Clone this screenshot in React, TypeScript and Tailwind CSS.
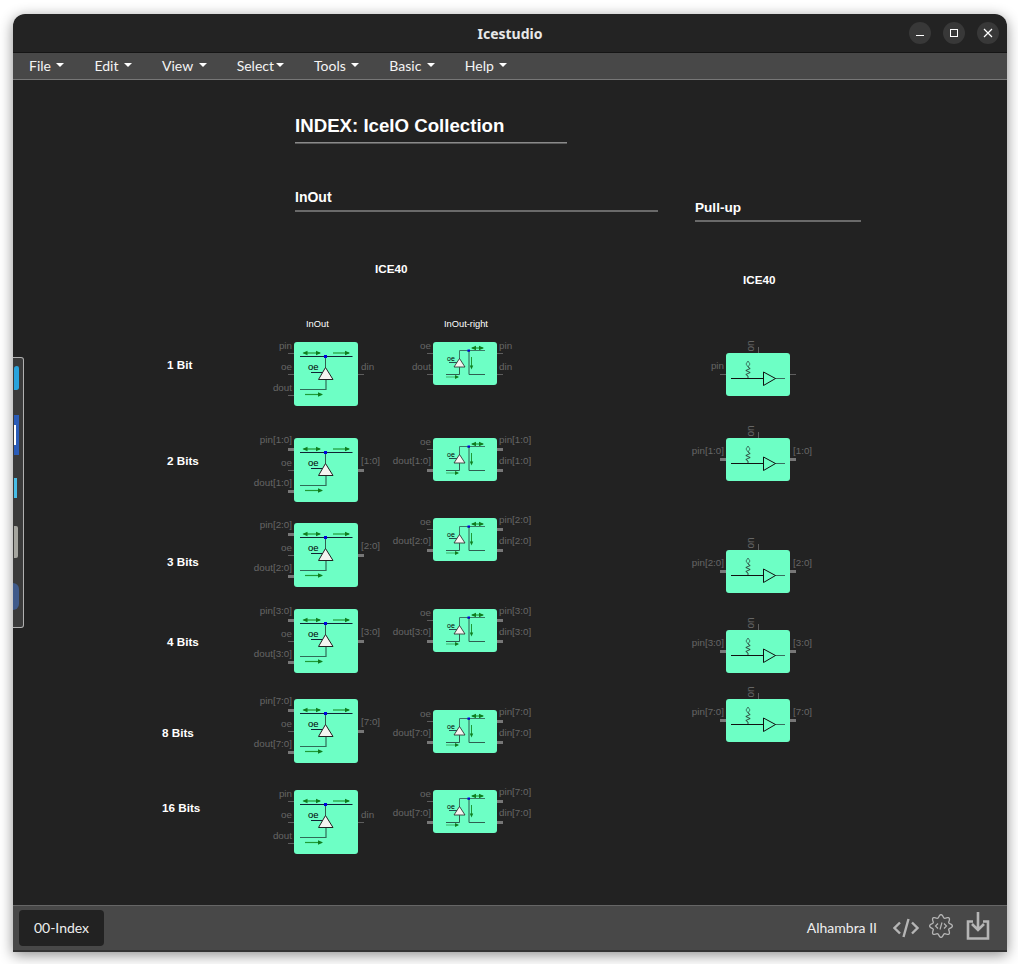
const menus = ['File', 'Edit', 'View', 'Select', 'Tools', 'Basic', 'Help']

type Side = { y: number; label: string; bus?: boolean; dy?: number }

function Arrow({ x1, x2, y, both }: { x1: number; x2: number; y: number; both?: boolean }) {
  return (
    <g>
      <line x1={x1} y1={y} x2={x2} y2={y} stroke="#1f9a35" strokeWidth="1.2" />
      <path d={`M${x2 + 1} ${y}l-5 -2.2v4.4z`} fill="#0f7d1e" />
      {both && <path d={`M${x1 - 1} ${y}l5 -2.2v4.4z`} fill="#0f7d1e" />}
    </g>
  )
}

function InOutArt() {
  return (
    <svg viewBox="0 0 64 64" className="absolute inset-0 h-16 w-16">
      <Arrow x1={9.5} x2={26} y={11} both />
      <Arrow x1={39} x2={55} y={11} />
      <line x1="6" y1="14.5" x2="58.5" y2="14.5" stroke="#123" strokeWidth="1" />
      <line x1="31.5" y1="14" x2="31.5" y2="26" stroke="#2f5f50" strokeWidth="1" />
      <rect x="30" y="13" width="3" height="3" fill="#0000e0" />
      <text x="14" y="28" fontSize="9.5" fill="#000000" className="font-['Liberation_Sans',sans-serif]">oe</text>
      <line x1="17" y1="30.5" x2="28" y2="30.5" stroke="#123" strokeWidth="1" />
      <path d="M31.5 25.5L39 37.5H24.5Z" fill="#f4f4f0" stroke="#222" strokeWidth="1" />
      <path d="M6 47.5H32V38" fill="none" stroke="#2f6b57" strokeWidth="1.2" />
      <Arrow x1={11} x2={28} y={52.5} />
    </svg>
  )
}

function InOutRightArt() {
  return (
    <svg viewBox="0 0 64 43" className="absolute inset-0 h-[43px] w-16">
      <Arrow x1={39} x2={50} y={6} both />
      <path d="M26.5 18V8.5H52" fill="none" stroke="#3a7a66" strokeWidth="1" />
      <rect x="34.5" y="7.5" width="2.5" height="2.5" fill="#0000e0" />
      <path d="M36 9V32.5H52" fill="none" stroke="#2f5f50" strokeWidth="1" />
      <line x1="38.5" y1="15" x2="38.5" y2="26" stroke="#1f9a35" strokeWidth="1" />
      <path d="M38.5 27.5l-1.7 -4h3.4z" fill="#0f7d1e" />
      <text x="14" y="18.5" fontSize="7" fill="#000000" className="font-['Liberation_Sans',sans-serif]">oe</text>
      <line x1="16" y1="20.5" x2="24" y2="20.5" stroke="#123" strokeWidth="0.8" />
      <path d="M26.5 16.5L32 25H21Z" fill="#f4f4f0" stroke="#222" strokeWidth="0.8" />
      <path d="M13 32.5H26.5V25" fill="none" stroke="#2f5f50" strokeWidth="1" />
      <line x1="13" y1="35" x2="25" y2="35" stroke="#4fd08a" strokeWidth="1.6" />
      <path d="M26 35l-4 -2v4z" fill="#0f7d1e" />
    </svg>
  )
}

function PullUpArt() {
  return (
    <svg viewBox="0 0 64 43" className="absolute inset-0 h-[43px] w-16">
      <path d="M22 8l2 3 -2 3 -2 -3z" fill="none" stroke="#2a4a40" strokeWidth="0.7" />
      <path d="M22 14l2.2 1.5 -4.4 2 4.4 2 -4.4 2 2.2 1.5V25" fill="none" stroke="#222" strokeWidth="0.8" />
      <line x1="5" y1="25.5" x2="37" y2="25.5" stroke="#111" strokeWidth="1" />
      <line x1="49" y1="25.5" x2="59" y2="25.5" stroke="#3a6d5e" strokeWidth="1" />
      <path d="M37.5 19L49.5 25.5 37.5 32.5Z" fill="none" stroke="#111" strokeWidth="1" />
    </svg>
  )
}

function Stub({ side, y, bus, w = 6 }: { side: 'l' | 'r'; y: number; bus?: boolean; w?: number }) {
  const h = bus ? 3 : 1
  return (
    <div
      className={bus ? 'absolute bg-[#777777]' : 'absolute bg-[#5e5e5e]'}
      style={{ top: y - h / 2, height: h, width: w, [side === 'l' ? 'left' : 'right']: -w }}
    />
  )
}

const labelTop = (p: Side) => p.y - (p.dy ?? (p.bus ? 15 : 13.5))

function Node({
  x,
  y,
  h,
  left,
  right,
  on,
  gap = 67,
  children,
}: {
  x: number
  y: number
  h: number
  left: Side[]
  right: Side[]
  on?: boolean
  gap?: number
  children: React.ReactNode
}) {
  // canvas starts at 13,80 in the window
  return (
    <div className="absolute w-16 rounded-[3px] bg-[#6dffc5]" style={{ left: x - 13, top: y - 80, height: h }}>
      {children}
      {left.map((p) => (
        <div key={p.label}>
          <Stub side="l" y={p.y} bus={p.bus} />
          <span
            className="absolute right-[66px] whitespace-nowrap text-[9.8px] leading-3 text-[#666666]"
            style={{ top: labelTop(p) }}
          >
            {p.label}
          </span>
        </div>
      ))}
      {right.map((p, i) => (
        <div key={i}>
          <Stub side="r" y={p.y} bus={p.bus} />
          <span
            className="absolute whitespace-nowrap text-[9.8px] leading-3 text-[#666666]"
            style={{ top: labelTop(p), left: gap }}
          >
            {p.label}
          </span>
        </div>
      ))}
      {on && (
        <>
          <div className="absolute left-[32px] top-[-6px] h-[6px] w-px bg-[#5e5e5e]" />
          <span className="absolute left-[19px] top-[-13px] rotate-[-90deg] text-[10px] leading-3 text-[#666666]">on</span>
        </>
      )}
    </div>
  )
}

const inOut = [
  { y: 342, r: '' },
  { y: 438, r: '1:0' },
  { y: 523, r: '2:0' },
  { y: 609, r: '3:0' },
  { y: 699, r: '7:0' },
  { y: 790, r: '' },
]
const inOutRight = [
  { y: 342, r: '' },
  { y: 438, r: '1:0' },
  { y: 518, r: '2:0' },
  { y: 609, r: '3:0' },
  { y: 710, r: '7:0' },
  { y: 790, r: '7:0' },
]
const pullUps = [
  { y: 353, r: '' },
  { y: 438, r: '1:0' },
  { y: 550, r: '2:0' },
  { y: 630, r: '3:0' },
  { y: 699, r: '7:0' },
]
const rowLabels = [
  { x: 167, y: 365, t: '1 Bit' },
  { x: 167, y: 461, t: '2 Bits' },
  { x: 167, y: 562, t: '3 Bits' },
  { x: 167, y: 642, t: '4 Bits' },
  { x: 162, y: 733, t: '8 Bits' },
  { x: 162, y: 808, t: '16 Bits' },
]

function CanvasText({ x, y, className, children }: { x: number; y: number; className: string; children: React.ReactNode }) {
  return (
    <div className={`absolute whitespace-nowrap leading-none ${className}`} style={{ left: x - 13, top: y - 80 }}>
      {children}
    </div>
  )
}

function Rule({ x, y, w, className }: { x: number; y: number; w: number; className: string }) {
  return <div className={`absolute ${className}`} style={{ left: x - 13, top: y - 80, width: w }} />
}

function Canvas() {
  return (
    <div className="relative flex-1 overflow-hidden bg-[#222222] font-['Liberation_Sans',sans-serif]">
      <CanvasText x={295} y={117} className="text-[18.67px] font-bold text-white">INDEX: IceIO Collection</CanvasText>
      <Rule x={295} y={142} w={272} className="h-[2px] border-t border-t-[#8a8a8a] bg-[#5a5a5a]" />
      <CanvasText x={295} y={190} className="text-[14px] font-bold text-white">InOut</CanvasText>
      <Rule x={295} y={210} w={363} className="h-[2px] bg-[#6a6a6a]" />
      <CanvasText x={695} y={201} className="text-[13.6px] font-bold text-white">Pull-up</CanvasText>
      <Rule x={695} y={220} w={166} className="h-[2px] bg-[#6a6a6a]" />
      <CanvasText x={375} y={263} className="text-[11.7px] font-bold text-white">ICE40</CanvasText>
      <CanvasText x={743} y={274} className="text-[11.7px] font-bold text-white">ICE40</CanvasText>
      <CanvasText x={306} y={320} className="text-[9.3px] text-white">InOut</CanvasText>
      <CanvasText x={444} y={320} className="text-[9.3px] text-white">InOut-right</CanvasText>

      {rowLabels.map((l) => (
        <CanvasText key={l.t} x={l.x} y={l.y - 6} className="text-[11.7px] font-bold text-white">{l.t}</CanvasText>
      ))}

      {inOut.map((n) => {
        const s = n.r ? `[${n.r}]` : ''
        return (
          <Node
            key={n.y}
            x={294}
            y={n.y}
            h={64}
            left={[
              { y: 11, label: `pin${s}`, bus: !!s },
              { y: 32, label: 'oe' },
              { y: 53, label: `dout${s}`, bus: !!s, dy: s ? 14 : 13 },
            ]}
            right={[{ y: 32, label: s || 'din', bus: !!s }]}
          >
            <InOutArt />
          </Node>
        )
      })}

      {inOutRight.map((n) => {
        const s = n.r ? `[${n.r}]` : ''
        return (
          <Node
            key={n.y}
            x={433}
            y={n.y}
            h={43}
            gap={66}
            left={[
              { y: 11, label: 'oe' },
              { y: 32, label: `dout${s}`, bus: !!s },
            ]}
            right={[
              { y: 11, label: `pin${s}`, bus: !!s },
              { y: 32, label: `din${s}`, bus: !!s },
            ]}
          >
            <InOutRightArt />
          </Node>
        )
      })}

      {pullUps.map((n) => {
        const s = n.r ? `[${n.r}]` : ''
        return (
          <Node
            key={n.y}
            x={726}
            y={n.y}
            h={43}
            on
            left={[{ y: 21, label: `pin${s}`, bus: !!s, dy: 14 }]}
            right={[{ y: 21, label: s, bus: !!s, dy: 14 }]}
          >
            <PullUpArt />
          </Node>
        )
      })}
    </div>
  )
}

function Dock() {
  return (
    <div className="absolute left-[13px] top-[357px] flex h-[271px] w-[11px] flex-col rounded-r-[3px] border border-l-0 border-[#b0b0b0] bg-[#3a3a3a]">
      <div className="ml-px mt-[8px] h-[24px] w-[5px] rounded-r-[3px] rounded-tl-[4px] bg-[#29a3dc]" />
      <div className="ml-px mt-[25px] flex h-[40px] w-[5px] items-center bg-[#2a5cb8]">
        <div className="h-[20px] w-[2px] bg-white" />
      </div>
      <div className="ml-px mt-[23px] h-[20px] w-[3px] bg-[#48bde6]" />
      <div className="ml-px mt-[28px] h-[32px] w-[4px] rounded-r-[2px] bg-[#a5a59f]" />
      <div className="mt-[25px] h-[27px] w-[6px] rounded-r-full bg-[#3f5a8a]" />
    </div>
  )
}

function WindowButton({ children }: { children: React.ReactNode }) {
  return <div className="flex h-[22px] w-[22px] items-center justify-center rounded-full bg-[#383838]">{children}</div>
}

// scalloped eight-lobe cog outline
const cogPath = Array.from({ length: 96 }, (_, i) => {
  const a = (i / 96) * Math.PI * 2
  const r = 9.9 + 1.5 * Math.cos(a * 8)
  return `${i === 0 ? 'M' : 'L'}${(12 + r * Math.sin(a)).toFixed(2)} ${(12 - r * Math.cos(a)).toFixed(2)}`
}).join('') + 'Z'

export default function App() {
  return (
    <div className="relative h-[964px] w-[1018px] overflow-hidden bg-white pl-[13px] pt-[14px] font-['Lato',sans-serif]">
      <div className="flex h-[938px] w-[994px] flex-col overflow-hidden rounded-t-[12px] shadow-[0_3px_14px_rgba(0,0,0,0.45)]">
        {/* title bar */}
        <div className="relative flex h-[38px] items-center justify-center bg-[#232323]">
          <span className="font-['Noto_Sans',sans-serif] text-[14px] font-bold text-[#e8e8e8]">Icestudio</span>
          <div className="absolute right-[8px] top-[8px] flex gap-[12px]">
            <WindowButton>
              <div className="mt-[4px] h-px w-[8px] bg-white" />
            </WindowButton>
            <WindowButton>
              <div className="h-[8px] w-[8px] border border-white" />
            </WindowButton>
            <WindowButton>
              <svg viewBox="0 0 10 10" className="h-[10px] w-[10px]">
                <path d="M1 1l8 8M9 1l-8 8" stroke="#fff" strokeWidth="1.2" />
              </svg>
            </WindowButton>
          </div>
        </div>
        {/* menu */}
        <div className="flex h-[28px] items-center border-b border-t border-b-[#777777] border-t-[#151515] bg-[#484848] pb-[2px] pl-px text-[14px] text-[#f4f4f4]">
          {menus.map((m) => (
            <div key={m} className="flex items-center px-[15px]">
              {m}
              <span className={m === 'Select' ? 'ml-[2px] h-0 w-0 border-x-4 border-t-4 border-x-transparent border-t-white' : 'ml-[5.5px] h-0 w-0 border-x-4 border-t-4 border-x-transparent border-t-white'} />
            </div>
          ))}
        </div>
        <Canvas />
        {/* footer */}
        <div className="flex h-[47px] items-center justify-between border-b-2 border-t border-b-[#333333] border-t-[#666666] bg-[#484848] pb-px pl-[6px] pr-[17px] text-[14px] text-[#eeeeee]">
          <div className="flex h-[36px] w-[85px] items-center justify-center rounded-[4px] bg-[#222222]">00-Index</div>
          <div className="flex items-center">
            <span>Alhambra II</span>
            <svg viewBox="0 0 26 20" className="ml-[16px] h-[20px] w-[26px]" fill="none" stroke="#b5b5b5" strokeWidth="2.4">
              <path d="M7 4.5L1.5 10 7 15.5M19 4.5L24.5 10 19 15.5M15.5 1L10.5 19" />
            </svg>
            <svg viewBox="0 0 24 24" className="mb-[3px] ml-[10px] h-[24px] w-[24px]" fill="none" stroke="#b5b5b5">
              <path d={cogPath} strokeWidth="1.3" />
              <path d="M9 9.5L6.5 12 9 14.5M15 9.5L17.5 12 15 14.5M13 8.5L11 15.5" strokeWidth="1.2" />
            </svg>
            <svg viewBox="0 0 24 28" className="mb-[4px] ml-[13px] h-[28px] w-[24px]" fill="none" stroke="#b5b5b5" strokeWidth="2.6">
              <path d="M7 9.5H2V26.5H22V9.5H17" />
              <path d="M12 0V17M6 12l6 6 6 -6" />
            </svg>
          </div>
        </div>
      </div>
      <Dock />
    </div>
  )
}
